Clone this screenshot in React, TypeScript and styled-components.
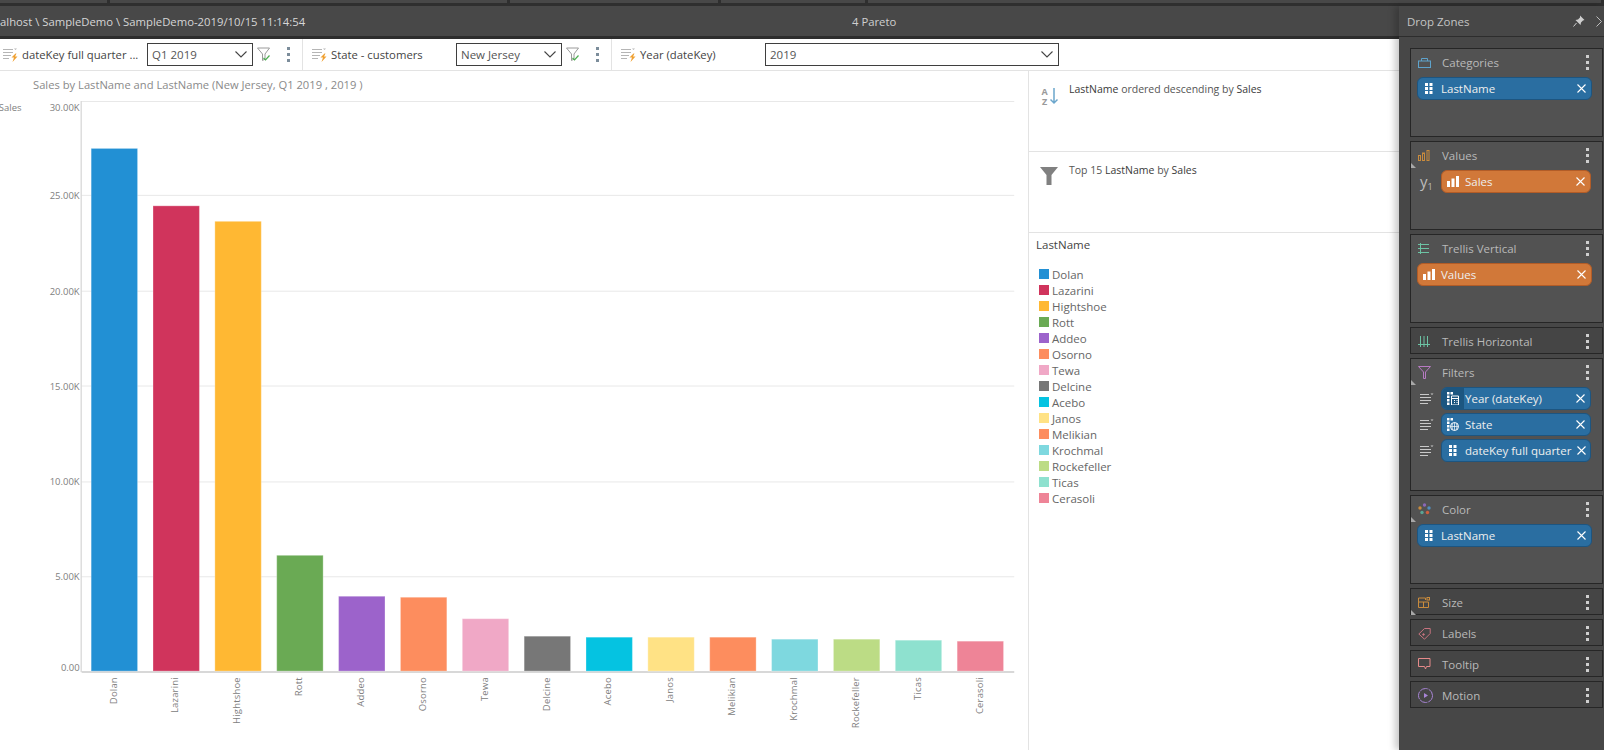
import React from "react";
import styled, { createGlobalStyle } from "styled-components";

const Global = createGlobalStyle`
    html, body {
        margin: 0;
        padding: 0;
        background: #ffffff;
        overflow: hidden;
    }
    * {
        box-sizing: border-box;
    }
`;

const Page = styled.div`
    width: 1604px;
    height: 750px;
    display: flex;
    flex-direction: column;
    overflow: hidden;
    font-family: "Open Sans", "Noto Sans", sans-serif;
    font-size: 11.5px;
`;

const TabStrip = styled.div`
    height: 6px;
    flex-shrink: 0;
    display: flex;
    gap: 3px;
    background: #2f2f2f;
    padding-bottom: 3px;
`;

const TabSlot = styled.div<{ $w: number }>`
    width: ${props => props.$w}px;
    flex-shrink: 0;
    background: #484848;
`;

const Body = styled.div`
    flex: 1;
    display: flex;
    min-height: 0;
`;

const Main = styled.div`
    width: 1399px;
    flex-shrink: 0;
    display: flex;
    flex-direction: column;
`;

const TitleBar = styled.div`
    height: 33px;
    flex-shrink: 0;
    display: flex;
    align-items: center;
    background: #484848;
    border-bottom: 3px solid #2d2d2d;
    color: #d6d6d6;
    font-size: 11.3px;
`;

const TitlePath = styled.div`
    width: 852px;
    flex-shrink: 0;
    white-space: nowrap;
`;

const TitleName = styled.div`
    font-weight: 500;
    color: #cfcfcf;
`;

const FilterBar = styled.div`
    height: 32px;
    flex-shrink: 0;
    display: flex;
    border-bottom: 1px solid #e3e3e3;
    background: #ffffff;
`;

const FilterGroup = styled.div<{ $w: number; $pad: number }>`
    width: ${props => props.$w}px;
    padding-left: ${props => props.$pad}px;
    display: flex;
    align-items: center;
    flex-shrink: 0;
    border-right: 1px solid #e3e3e3;

    &:last-child {
        border-right: none;
        flex: 1;
    }
`;

const FilterLabel = styled.div`
    width: 129px;
    padding-left: 4px;
    flex-shrink: 0;
    font-weight: 500;
    font-size: 11.3px;
    color: #444444;
    white-space: nowrap;
`;

const FilterSelect = styled.div<{ $w: number }>`
    width: ${props => props.$w}px;
    height: 23px;
    flex-shrink: 0;
    display: flex;
    align-items: center;
    justify-content: space-between;
    padding: 0 5px 0 4px;
    border: 1px solid #3f3f3f;
    color: #555555;
`;

const FilterIconSlot = styled.div`
    width: 14px;
    margin-left: 4px;
    display: flex;
`;

const FilterDots = styled.div`
    margin-left: 16px;
    display: flex;
    flex-direction: column;
    gap: 3px;
`;

const Dot = styled.span<{ $light?: boolean }>`
    display: block;
    width: 3px;
    height: 3px;
    background: ${props => props.$light ? '#cfcfcf' : '#7c8d9b'};
`;

const Content = styled.div`
    flex: 1;
    display: flex;
    min-height: 0;
    background: #ffffff;
`;

const ChartPane = styled.div`
    width: 1028px;
    flex-shrink: 0;
    display: flex;
    flex-direction: column;
`;

const ChartTitle = styled.div`
    height: 23px;
    flex-shrink: 0;
    padding: 6px 0 0 33px;
    color: #8a8a8a;
    font-size: 11.2px;
    line-height: 16px;
    white-space: nowrap;
`;

const ChartSvg = styled.svg`
    display: block;
    width: 1028px;
    height: 657px;

    text {
        font-family: "Open Sans", sans-serif;
        font-size: 9.5px;
        fill: #808080;
    }
`;

const SidePane = styled.div`
    flex: 1;
    display: flex;
    flex-direction: column;
    border-left: 1px solid #e3e3e3;
`;

const NoteCard = styled.div`
    height: 81px;
    flex-shrink: 0;
    display: flex;
    align-items: flex-start;
    padding: 11px 0 0 11px;
    border-bottom: 1px solid #e3e3e3;
    color: #555555;
    font-size: 10.5px;
    line-height: 15px;
`;

const NoteIcon = styled.div`
    width: 29px;
    margin-top: 3px;
    flex-shrink: 0;
`;

const NoteText = styled.div`
    white-space: nowrap;

    b {
        font-weight: 400;
        color: #3a3a3a;
    }
`;

const Legend = styled.div`
    padding: 3px 0 0 7px;
`;

const LegendTitle = styled.div`
    font-weight: 500;
    color: #444444;
    line-height: 17px;
    margin-bottom: 13px;
`;

const LegendRow = styled.div`
    height: 16px;
    display: flex;
    align-items: center;
    gap: 3px;
    padding-left: 3px;
    color: #666666;
`;

const Swatch = styled.span<{ $color: string }>`
    width: 10px;
    height: 10px;
    flex-shrink: 0;
    background: ${props => props.$color};
`;

const Panel = styled.div`
    flex: 1;
    position: relative;
    z-index: 2;
    display: flex;
    flex-direction: column;
    background: #474747;
    box-shadow: -4px 0 7px rgba(0, 0, 0, 0.22);
`;

const PanelHeader = styled.div`
    height: 31px;
    flex-shrink: 0;
    display: flex;
    align-items: center;
    padding: 0 0 0 8px;
    border-bottom: 1px solid #2d2d2d;
    color: #c4c4c4;
    font-weight: 500;
`;

const PanelTitle = styled.div`
    flex: 1;
`;

const PanelIcon = styled.div<{ $gap: number }>`
    display: flex;
    margin-right: ${props => props.$gap}px;
`;

const ZoneList = styled.div`
    display: flex;
    flex-direction: column;
    gap: 4px;
    padding: 11px 1px 0 11px;
`;

const ZoneBox = styled.div<{ $open: boolean; $height: number }>`
    position: relative;
    height: ${props => props.$height}px;
    border: 1px solid #262626;
    background: ${props => props.$open ? '#525252' : '#454545'};
    padding: 0 0 0 6px;
`;

const ZoneHeader = styled.div`
    height: 26px;
    display: flex;
    align-items: center;
`;

const ZoneIcon = styled.div`
    width: 25px;
    padding-left: 1px;
    display: flex;
    flex-shrink: 0;
`;

const ZoneName = styled.div`
    flex: 1;
    color: #b9b9b9;
    font-weight: 500;
`;

const ZoneDots = styled.div`
    display: flex;
    flex-direction: column;
    gap: 3px;
    margin-right: 13px;
`;

const Corner = styled.span`
    position: absolute;
    left: 0;
    top: 21px;
    width: 5px;
    height: 5px;
    background: #a8a8a8;
    clip-path: polygon(0 0, 100% 100%, 0 100%);
`;

const ChipList = styled.div`
    display: flex;
    flex-direction: column;
    gap: 3px;
    margin-top: 2px;
`;

const ChipRow = styled.div`
    display: flex;
    align-items: center;
`;

const ChipLead = styled.div`
    width: 24px;
    flex-shrink: 0;
    display: flex;
    padding-left: 3px;
    color: #bdbdbd;
    font-size: 15px;
    line-height: 15px;

    sub {
        font-size: 9px;
        line-height: 0;
        vertical-align: -3px;
    }
`;

const Chip = styled.div<{ $tone: 'blue' | 'orange'; $w: number }>`
    width: ${props => props.$w}px;
    height: 23px;
    flex-shrink: 0;
    display: flex;
    align-items: center;
    border: 1px solid ${props => props.$tone === 'blue' ? '#1d5580' : '#b25c27'};
    border-radius: 6px;
    background: ${props => props.$tone === 'blue' ? '#2a6ea1' : '#d17839'};
    color: #eeeeee;
    overflow: hidden;
`;

const ChipIcon = styled.div<{ $dark?: boolean }>`
    width: 22px;
    height: 100%;
    flex-shrink: 0;
    display: flex;
    align-items: center;
    justify-content: center;
    background: ${props => props.$dark ? '#1c5680' : 'transparent'};
`;

const ChipText = styled.div`
    flex: 1;
    padding-left: 1px;
    white-space: nowrap;
`;

const ChipClose = styled.div`
    width: 20px;
    flex-shrink: 0;
    display: flex;
    justify-content: center;
`;

const TOP_TABS = [107, 397, 208, 144, 733];

const BARS = [
    { name: "Dolan", color: "#2290d4", top: 147.5 },
    { name: "Lazarini", color: "#d0345c", top: 205 },
    { name: "Hightshoe", color: "#ffb833", top: 220.5 },
    { name: "Rott", color: "#6aaa54", top: 555 },
    { name: "Addeo", color: "#9c63cb", top: 596 },
    { name: "Osorno", color: "#fd8d5e", top: 597 },
    { name: "Tewa", color: "#f0a8c6", top: 618.5 },
    { name: "Delcine", color: "#777777", top: 636 },
    { name: "Acebo", color: "#05c3e1", top: 637 },
    { name: "Janos", color: "#ffe285", top: 637 },
    { name: "Melikian", color: "#fd8d5e", top: 637 },
    { name: "Krochmal", color: "#7ed8df", top: 639 },
    { name: "Rockefeller", color: "#bcdc85", top: 639 },
    { name: "Ticas", color: "#8ee1cf", top: 640 },
    { name: "Cerasoli", color: "#ee8497", top: 641 },
];

const TICKS = [
    { label: "30.00K", y: 100.5, textY: 110 },
    { label: "25.00K", y: 194.5, textY: 198 },
    { label: "20.00K", y: 290.5, textY: 294 },
    { label: "15.00K", y: 385.5, textY: 389 },
    { label: "10.00K", y: 481.5, textY: 485 },
    { label: "5.00K", y: 576.5, textY: 580 },
    { label: "0.00", y: 672, textY: 671 },
];

const ListBolt = () => (
    <svg width="15" height="15" viewBox="0 0 15 15">
        <path d="M0 2.500h10M0 5.500h10M0 8.500h8M0 11.500h6" stroke="#b5b5b5" strokeWidth="1" fill="none" />
        <path d="M11 1.500h3l-1.500 1.500z" fill="#b5b5b5" />
        <path d="M12.500 6.500L8.500 10.500h2.500L9.500 15l5-5.500h-2.500l1.500-3z" fill="#f0a030" />
    </svg>
);

const FunnelCheck = () => (
    <svg width="14" height="15" viewBox="0 0 14 15">
        <path d="M0.500 1h12L8 7v5L5.500 13.500V7z" stroke="#9a9a9a" strokeWidth="1" fill="none" />
        <path d="M6.500 11l2 2 4-4.500" stroke="#4caf50" strokeWidth="1.200" fill="none" />
    </svg>
);

const Chevron = () => (
    <svg width="12" height="7" viewBox="0 0 12 7">
        <path d="M0.500 0.500L6 6l5.500-5.500" stroke="#444444" strokeWidth="1.100" fill="none" />
    </svg>
);

const VDots = ({ light }: { light?: boolean }) => {
    const Wrap = light ? ZoneDots : FilterDots;
    return (
        <Wrap>
            <Dot $light={light} />
            <Dot $light={light} />
            <Dot $light={light} />
        </Wrap>
    );
};

const GridDots = () => (
    <svg width="8" height="11" viewBox="0 0 8 11" fill="#ffffff">
        {[0, 4, 8].map(y => (
            <React.Fragment key={y}>
                <rect x="0" y={y} width="3" height="3" />
                <rect x="4.500" y={y} width="3" height="3" />
            </React.Fragment>
        ))}
    </svg>
);

const BarsIcon = () => (
    <svg width="12" height="11" viewBox="0 0 12 11" fill="#ffffff">
        <rect x="0" y="5" width="3" height="6" />
        <rect x="4.500" y="2.500" width="3" height="8.500" />
        <rect x="9" y="0" width="3" height="11" />
    </svg>
);

const CalendarField = () => (
    <svg width="12" height="13" viewBox="0 0 12 13" fill="#ffffff">
        <rect x="0" y="0" width="2.500" height="2.500" />
        <rect x="3.500" y="0" width="2.500" height="2.500" />
        <rect x="0" y="3.500" width="2.500" height="2.500" />
        <rect x="0" y="7" width="2.500" height="2.500" />
        <rect x="0" y="10.500" width="2.500" height="2.500" />
        <path d="M4.500 4h7v9h-7z" fill="none" stroke="#ffffff" strokeWidth="1" />
        <path d="M4.500 6.500h7M7 8.500h1M9.500 8.500h1M7 10.500h1M9.500 10.500h1" stroke="#ffffff" strokeWidth="1" />
    </svg>
);

const GlobeField = () => (
    <svg width="12" height="13" viewBox="0 0 12 13" fill="#ffffff">
        <rect x="0" y="0" width="2.500" height="2.500" />
        <rect x="3.500" y="0" width="2.500" height="2.500" />
        <rect x="0" y="3.500" width="2.500" height="2.500" />
        <rect x="0" y="7" width="2.500" height="2.500" />
        <rect x="0" y="10.500" width="2.500" height="2.500" />
        <circle cx="7.500" cy="8.500" r="4" fill="#2a6ea1" stroke="#ffffff" strokeWidth="1" />
        <path d="M3.500 8.500h8M7.500 4.500v8M5.500 5.500q-1 3 0 6M9.500 5.500q1 3 0 6" stroke="#ffffff" strokeWidth="0.700" fill="none" />
    </svg>
);

const CloseX = () => (
    <svg width="9" height="9" viewBox="0 0 9 9">
        <path d="M0.500 0.500l8 8M8.500 0.500l-8 8" stroke="#ffffff" strokeWidth="1.100" />
    </svg>
);

const FilterLines = () => (
    <svg width="14" height="12" viewBox="0 0 14 12">
        <path d="M0 1.500h9M0 4.500h11M0 7.500h11M0 10.500h8" stroke="#c9c9c9" strokeWidth="1.100" fill="none" />
        <path d="M10.500 0.500h3l-1.500 1.500z" fill="#c9c9c9" />
    </svg>
);

const CategoriesIcon = () => (
    <svg width="13" height="11" viewBox="0 0 13 11" fill="none" stroke="#5ea3cc">
        <rect x="0.500" y="4" width="12" height="6.500" />
        <path d="M3.500 4V1.500h6V4" />
    </svg>
);

const ValuesIcon = () => (
    <svg width="12" height="11" viewBox="0 0 12 11" fill="none" stroke="#c98b3c">
        <rect x="0.500" y="5.500" width="2" height="5" />
        <rect x="4.500" y="3" width="2" height="7.500" />
        <rect x="9" y="0.500" width="2" height="10" />
    </svg>
);

const TrellisVIcon = () => (
    <svg width="12" height="11" viewBox="0 0 12 11" fill="none" stroke="#6cc3a4">
        <path d="M0 1.500h11M0 5.500h11M0 9.500h11M2.500 0v11" />
    </svg>
);

const TrellisHIcon = () => (
    <svg width="12" height="11" viewBox="0 0 12 11" fill="none" stroke="#6cc3a4">
        <path d="M2.500 0v11M6 0v11M9.500 0v11M0 8.500h12" />
    </svg>
);

const FiltersIcon = () => (
    <svg width="13" height="13" viewBox="0 0 13 13" fill="none" stroke="#b77ac2">
        <path d="M0.500 0.500h12L7.500 6v6.500h-2V6z" />
    </svg>
);

const ColorIcon = () => (
    <svg width="13" height="12" viewBox="0 0 13 12">
        <circle cx="2" cy="5" r="1.700" fill="#c98b3c" />
        <circle cx="6.500" cy="2" r="1.700" fill="#8a68b8" />
        <circle cx="11" cy="5" r="1.700" fill="#4f8fc0" />
        <circle cx="4" cy="9.500" r="1.700" fill="#5aa595" />
        <circle cx="9.500" cy="9.500" r="1.700" fill="#d0603e" />
    </svg>
);

const SizeIcon = () => (
    <svg width="12" height="11" viewBox="0 0 12 11" fill="none" stroke="#c98b3c">
        <path d="M0.500 1h7v2M0.500 1v9.500h10V5h-10M5.500 5v5.500" />
        <rect x="9" y="0.500" width="2.500" height="2.500" />
    </svg>
);

const LabelsIcon = () => (
    <svg width="13" height="13" viewBox="0 0 13 13" fill="none" stroke="#c7737f">
        <path d="M0.800 7L6.500 1.500h5.700V6.500L6.500 12.200z" />
        <circle cx="5.500" cy="7.500" r="0.800" fill="#c7737f" />
    </svg>
);

const TooltipIcon = () => (
    <svg width="13" height="12" viewBox="0 0 13 12" fill="none" stroke="#e58a8a">
        <path d="M0.500 0.500h11.500v8H8.500l-1 2.500-1-2.500h-6z" />
    </svg>
);

const MotionIcon = () => (
    <svg width="15" height="15" viewBox="0 0 15 15" fill="none" stroke="#a885d6">
        <circle cx="7.500" cy="7.500" r="7" strokeDasharray="8 1" />
        <path d="M6 5l4 2.500L6 10z" fill="#a885d6" stroke="none" />
    </svg>
);

const PinIcon = () => (
    <svg width="12" height="12" viewBox="0 0 12 12" fill="#cfcfcf">
        <path d="M7 0.500l4.500 4.500-1.500 0.500-2 2 -0.500 2.500L2.500 5l2.500-0.500 2-2z" />
        <path d="M3.500 8L0.500 11.500" stroke="#cfcfcf" fill="none" />
    </svg>
);

const ChevronRight = () => (
    <svg width="6" height="11" viewBox="0 0 6 11">
        <path d="M0.500 0.500l5 5-5 5" stroke="#bdbdbd" fill="none" />
    </svg>
);

const SortIcon = () => (
    <svg width="19" height="22" viewBox="0 0 19 22">
        <text x="1.500" y="10" fontFamily="Open Sans, sans-serif" fontSize="9" fontWeight="700" fill="#9a9a9a">A</text>
        <text x="2" y="19.500" fontFamily="Open Sans, sans-serif" fontSize="9" fontWeight="700" fill="#9a9a9a">Z</text>
        <path d="M14 3v15M10.500 14.500L14 18l3.500-3.500" stroke="#6ba6cc" strokeWidth="1.500" fill="none" />
    </svg>
);

const FunnelSolid = () => (
    <svg width="18" height="19" viewBox="0 0 18 19">
        <path d="M0 1h18l-6.500 8v10h-5V9z" fill="#808080" />
    </svg>
);

interface ChipItem {
    label: string;
    tone: 'blue' | 'orange';
    icon: React.ReactNode;
    lead?: React.ReactNode;
    darkIcon?: boolean;
}

interface ZoneProps {
    name: string;
    icon: React.ReactNode;
    height: number;
    corner?: boolean;
    chips?: ChipItem[];
}

const Zone: React.FC<ZoneProps> = ({ name, icon, height, corner, chips }) => (
    <ZoneBox $open={!!chips} $height={height}>
        <ZoneHeader>
            <ZoneIcon>{icon}</ZoneIcon>
            <ZoneName>{name}</ZoneName>
            <VDots light />
        </ZoneHeader>
        {corner && <Corner />}
        {chips && (
            <ChipList>
                {chips.map(chip => (
                    <ChipRow key={chip.label}>
                        {chip.lead && <ChipLead>{chip.lead}</ChipLead>}
                        <Chip $tone={chip.tone} $w={chip.lead ? 150 : 175}>
                            <ChipIcon $dark={chip.darkIcon}>{chip.icon}</ChipIcon>
                            <ChipText>{chip.label}</ChipText>
                            <ChipClose><CloseX /></ChipClose>
                        </Chip>
                    </ChipRow>
                ))}
            </ChipList>
        )}
    </ZoneBox>
);

const Chart = () => (
    <ChartSvg viewBox="0 93 1028 657">
        <text x="-2" y="110">Sales</text>
        {TICKS.map(t => (
            <React.Fragment key={t.label}>
                <line x1="81" x2="1015" y1={t.y} y2={t.y} stroke={t.y === 672 ? "#d8d8d8" : "#e8e8e8"} strokeWidth={t.y === 672 ? 2 : 1} />
                <text x="79" y={t.textY} textAnchor="end">{t.label}</text>
            </React.Fragment>
        ))}
        <line x1="80.5" x2="80.5" y1="100" y2="672" stroke="#cccccc" />
        {BARS.map((b, i) => {
            const x = 90.5 + i * 61.95;
            return (
                <React.Fragment key={b.name}>
                    <rect
                        x={x}
                        y={b.top}
                        width="46.5"
                        height={671 - b.top}
                        fill={b.color}
                        stroke="#ffffff"
                        strokeOpacity="0.3"
                    />
                    <text
                        transform={`translate(${x + 25.5} 677) rotate(-90)`}
                        textAnchor="end"
                        letterSpacing="0.2"
                    >
                        {b.name}
                    </text>
                </React.Fragment>
            );
        })}
    </ChartSvg>
);

export default function App() {
    return (
        <Page>
            <Global />
            <TabStrip>
                {TOP_TABS.map((w, i) => <TabSlot key={i} $w={w} />)}
            </TabStrip>
            <Body>
                <Main>
                    <TitleBar>
                        <TitlePath>alhost \ SampleDemo \ SampleDemo-2019/10/15 11:14:54</TitlePath>
                        <TitleName>4 Pareto</TitleName>
                    </TitleBar>
                    <FilterBar>
                        <FilterGroup $w={303} $pad={3}>
                            <ListBolt />
                            <FilterLabel>dateKey full quarter ...</FilterLabel>
                            <FilterSelect $w={106}>Q1 2019<Chevron /></FilterSelect>
                            <FilterIconSlot><FunnelCheck /></FilterIconSlot>
                            <VDots />
                        </FilterGroup>
                        <FilterGroup $w={309} $pad={9}>
                            <ListBolt />
                            <FilterLabel>State - customers</FilterLabel>
                            <FilterSelect $w={106}>New Jersey<Chevron /></FilterSelect>
                            <FilterIconSlot><FunnelCheck /></FilterIconSlot>
                            <VDots />
                        </FilterGroup>
                        <FilterGroup $w={787} $pad={9}>
                            <ListBolt />
                            <FilterLabel>Year (dateKey)</FilterLabel>
                            <FilterSelect $w={294}>2019<Chevron /></FilterSelect>
                        </FilterGroup>
                    </FilterBar>
                    <Content>
                        <ChartPane>
                            <ChartTitle>Sales by LastName and LastName (New Jersey, Q1 2019 , 2019 )</ChartTitle>
                            <Chart />
                        </ChartPane>
                        <SidePane>
                            <NoteCard>
                                <NoteIcon><SortIcon /></NoteIcon>
                                <NoteText><b>LastName</b> ordered descending by <b>Sales</b></NoteText>
                            </NoteCard>
                            <NoteCard>
                                <NoteIcon><FunnelSolid /></NoteIcon>
                                <NoteText>Top 15 <b>LastName</b> by <b>Sales</b></NoteText>
                            </NoteCard>
                            <Legend>
                                <LegendTitle>LastName</LegendTitle>
                                {BARS.map(b => (
                                    <LegendRow key={b.name}>
                                        <Swatch $color={b.color} />
                                        {b.name}
                                    </LegendRow>
                                ))}
                            </Legend>
                        </SidePane>
                    </Content>
                </Main>
                <Panel>
                    <PanelHeader>
                        <PanelTitle>Drop Zones</PanelTitle>
                        <PanelIcon $gap={11}><PinIcon /></PanelIcon>
                        <PanelIcon $gap={2}><ChevronRight /></PanelIcon>
                    </PanelHeader>
                    <ZoneList>
                        <Zone name="Categories" icon={<CategoriesIcon />} height={89}
                            chips={[{ label: "LastName", tone: "blue", icon: <GridDots /> }]} />
                        <Zone name="Values" icon={<ValuesIcon />} height={89} corner
                            chips={[{ label: "Sales", tone: "orange", icon: <BarsIcon />, lead: <span>y<sub>1</sub></span> }]} />
                        <Zone name="Trellis Vertical" icon={<TrellisVIcon />} height={89}
                            chips={[{ label: "Values", tone: "orange", icon: <BarsIcon /> }]} />
                        <Zone name="Trellis Horizontal" icon={<TrellisHIcon />} height={27} />
                        <Zone name="Filters" icon={<FiltersIcon />} height={133} corner
                            chips={[
                                { label: "Year (dateKey)", tone: "blue", icon: <CalendarField />, lead: <FilterLines />, darkIcon: true },
                                { label: "State", tone: "blue", icon: <GlobeField />, lead: <FilterLines /> },
                                { label: "dateKey full quarter", tone: "blue", icon: <GridDots />, lead: <FilterLines /> },
                            ]} />
                        <Zone name="Color" icon={<ColorIcon />} height={89} corner
                            chips={[{ label: "LastName", tone: "blue", icon: <GridDots /> }]} />
                        <Zone name="Size" icon={<SizeIcon />} height={27} corner />
                        <Zone name="Labels" icon={<LabelsIcon />} height={27} />
                        <Zone name="Tooltip" icon={<TooltipIcon />} height={27} />
                        <Zone name="Motion" icon={<MotionIcon />} height={27} />
                    </ZoneList>
                </Panel>
            </Body>
        </Page>
    );
}
